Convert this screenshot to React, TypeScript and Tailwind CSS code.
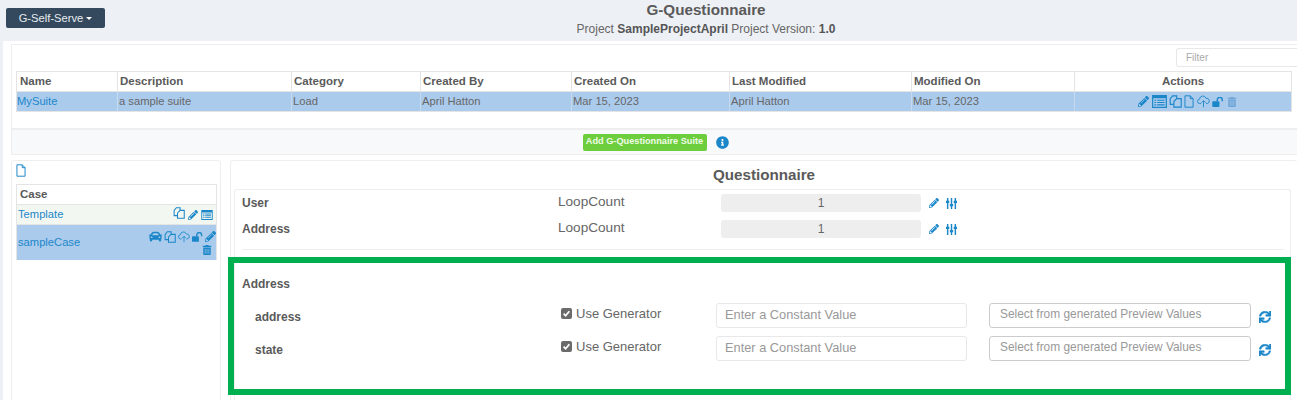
import { FaCar, FaInfoCircle, FaPencilAlt, FaSync, FaTrashAlt } from "react-icons/fa";

const blue = "text-[#1b87c9]";

const Duplicate = ({ className = "" }: { className?: string }) => (
  <svg viewBox="0 0 16 16" className={className} fill="none" stroke="currentColor" strokeWidth="1.4">
    <path d="M5.500 11.500H1.500V4.500l3-3.500h5v3.500" />
    <path d="M6 8l3.500-3.500h5.500V15H6z" />
  </svg>
);

const FileIcon = ({ className = "" }: { className?: string }) => (
  <svg viewBox="0 0 12 16" className={className} fill="none" stroke="currentColor" strokeWidth="1.200">
    <path d="M1 1h6.500L11 4.500V15H1z" />
    <path d="M7.500 1v3.500H11" />
  </svg>
);

const CloudUp = ({ className = "" }: { className?: string }) => (
  <svg viewBox="0 0 16 16" className={className} fill="none" stroke="currentColor" strokeWidth="1.100">
    <path d="M5 10.500H3.500a2.700 2.700 0 0 1-.3-5.400A4 4 0 0 1 11 4a3.300 3.300 0 0 1 1.500 6.500H11" />
    <path d="M8 15V7M5.500 9.500L8 7l2.500 2.500" />
  </svg>
);

const Unlock = ({ className = "" }: { className?: string }) => (
  <svg viewBox="0 0 16 14" className={className} fill="currentColor">
    <rect x="0" y="6" width="10" height="8" rx="1" />
    <path d="M7 6V4a3.500 3.500 0 0 1 7 0v2" fill="none" stroke="currentColor" strokeWidth="2" />
  </svg>
);

const ListAlt = ({ className = "" }: { className?: string }) => (
  <svg viewBox="0 0 16 14" className={className} fill="currentColor">
    <path fillRule="evenodd" d="M0 0h16v14H0zM1.300 3.500v9.200h13.400V3.500z" />
    <path d="M2.500 5h2v1.200h-2zM5.500 5h8v1.200h-8zM2.500 7.500h2v1.200h-2zM5.500 7.500h8v1.200h-8zM2.500 10h2v1.200h-2zM5.500 10h8v1.200h-8z" />
  </svg>
);

const Sliders = ({ className = "" }: { className?: string }) => (
  <svg viewBox="0 0 12 12" className={className} fill="currentColor">
    <path d="M1 0h1.600v12H1zM5.200 0h1.600v12H5.200zM9.400 0H11v12H9.400z" />
    <path d="M0 3h3.600v2.400H0zM4.200 6.500h3.600v2.400H4.200zM8.400 3H12v2.400H8.400z" />
  </svg>
);

const Checked = () => (
  <span className="flex h-[11px] w-[11px] items-center justify-center rounded-[2px] bg-[#6b6b6b]">
    <svg viewBox="0 0 10 10" className="h-[9px] w-[9px]" fill="none" stroke="white" strokeWidth="2">
      <path d="M1.800 5.200L4 7.500l4.200-5" />
    </svg>
  </span>
);

const columns = [
  ["Name", "w-[101px]"],
  ["Description", "w-[174px]"],
  ["Category", "w-[129px]"],
  ["Created By", "w-[151px]"],
  ["Created On", "w-[158px]"],
  ["Last Modified", "w-[182px]"],
  ["Modified On", "w-[163px]"],
];

const cells = ["a sample suite", "Load", "April Hatton", "Mar 15, 2023", "April Hatton", "Mar 15, 2023"];

const LoopRow = ({ name }: { name: string }) => (
  <div className="flex h-[26px] items-center text-[#5a5a5a]">
    <div className="w-[323px] pl-[7px] text-[12px] font-bold">{name}</div>
    <div className="mb-[1px] w-[163px] text-[13.600px] text-[#666]">LoopCount</div>
    <div className="flex h-[18px] w-[200px] items-center justify-center rounded-[3px] bg-[#eeeeee] text-[12px] text-[#666]">1</div>
    <FaPencilAlt className={`ml-[8px] text-[10px] ${blue}`} />
    <Sliders className={`ml-[7px] h-[11px] w-[11px] ${blue}`} />
  </div>
);

const GeneratorRow = ({ name }: { name: string }) => (
  <div className="flex h-[33px] items-center text-[#5a5a5a]">
    <div className="w-[326px] pl-[20px] text-[12px] font-bold">{name}</div>
    <div className="mb-[6px] flex w-[155px] items-center gap-[4px] text-[13px] text-[#666]">
      <Checked />
      <span>Use Generator</span>
    </div>
    <div className="mb-[3px] flex h-[25px] w-[251px] items-center rounded-[3px] border border-[#e8e8e8] pl-[8px] text-[12.800px] text-[#999]">
      Enter a Constant Value
    </div>
    <div className="mb-[3px] ml-[22px] flex h-[25px] w-[262px] items-center rounded-[3px] border border-[#cccccc] pl-[10px] text-[11.900px] text-[#999]">
      Select from generated Preview Values
    </div>
    <FaSync className={`ml-[8px] stroke-[20] text-[12px] ${blue}`} />
  </div>
);

export default function App() {
  return (
    <div className="h-[400px] w-[1297px] overflow-hidden bg-[#edf0f5] font-['Liberation_Sans',Arial,sans-serif] text-[11.200px] text-[#666]">
      <header className="flex h-[41px]">
        <div className="w-[105px] pl-[6px] pt-[8px]">
          <button className="flex h-[20px] w-[99px] items-center justify-center gap-[3px] rounded-[2px] bg-[#34495e] text-[11.200px] text-[#e8ecf0]">
            G-Self-Serve
            <span className="mt-[1px] border-x-[3px] border-t-[3px] border-x-transparent border-t-white" />
          </button>
        </div>
        <div className="flex-1 pl-[10px] pt-[1px] text-center">
          <h1 className="text-[15.200px] leading-[18px] font-bold text-[#5a5a5a]">G-Questionnaire</h1>
          <p className="mt-[2px] text-[12px] leading-[16px] text-[#666]">
            Project <b className="text-[#555]">SampleProjectApril</b> Project Version: <b className="text-[#555]">1.0</b>
          </p>
        </div>
      </header>

      <main className="ml-[3px] h-[359px] bg-white pl-[8px] pt-[3px]">
        <section className="h-[85px] border border-r-0 border-[#eeeeee] pl-[4px]">
          <div className="flex h-[26px] justify-end pt-[3px]">
            <div className="h-[19px] w-[121px] rounded-l-[3px] border border-r-0 border-[#e8e8e8] pl-[9px] text-[10px] leading-[17px] text-[#aaa]">
              Filter
            </div>
          </div>
          <div className="mr-[5px] border-x border-[#e4e4e4]">
            <div className="flex h-[21px] items-center border-y border-[#e4e4e4] text-[11.500px] font-bold text-[#5a5a5a]">
              {columns.map(([label, width], i) => (
                <div key={label} className={`${width} h-full border-r border-[#e4e4e4] leading-[19px] ${i === 0 ? "pl-[3px]" : "pl-[2px]"}`}>
                  {label}
                </div>
              ))}
              <div className="flex-1 text-center">Actions</div>
            </div>
            <div className="flex h-[20px] items-center border-b border-[#e4e4e4] bg-[#abcbed]">
              <div className="h-full w-[101px] border-r border-[#c6d9ee] leading-[19px] text-[#1b87c9]">MySuite</div>
              {cells.map((cell, i) => (
                <div key={i} className={`${columns[i + 1][1]} h-full border-r border-[#c6d9ee] pl-[1px] leading-[19px]`}>
                  {cell}
                </div>
              ))}
              <div className={`ml-[8px] flex flex-1 items-center justify-center gap-[2px] ${blue}`}>
                <FaPencilAlt className="text-[11px]" />
                <ListAlt className="ml-[1px] h-[13px] w-[15px]" />
                <Duplicate className="h-[13px] w-[13px]" />
                <FileIcon className="h-[13px] w-[10px]" />
                <CloudUp className="ml-[1px] h-[13px] w-[13px]" />
                <Unlock className="h-[10px] w-[12px]" />
                <FaTrashAlt className="ml-[1px] text-[10px] text-[#6fa5d6]" />
              </div>
            </div>
          </div>
        </section>

        <section className="flex h-[26px] items-center justify-center gap-[9px] border border-r-0 border-[#eeeeee] bg-[#f8f9fa] pl-[2px]">
          <button className="flex h-[17px] w-[124px] items-center justify-center whitespace-nowrap rounded-[2px] bg-[#6cce3c] text-[9.200px] font-bold text-[#f0fbe8]">
            Add G-Questionnaire Suite
          </button>
          <FaInfoCircle className={`text-[13px] ${blue}`} />
        </section>

        <div className="mt-[5px] flex gap-[9px]">
          <aside className="h-[241px] w-[210px] rounded-t-[3px] border border-[#eeeeee] pl-[4px] pr-[3px]">
            <FileIcon className={`mt-[3px] h-[13px] w-[10px] ${blue}`} />
            <div className="mt-[7px] border-x border-[#e4e4e4]">
              <div className="flex h-[21px] items-center border-y border-[#e4e4e4] pl-[3px] text-[11.500px] font-bold text-[#5a5a5a]">Case</div>
              <div className="flex h-[20px] items-center justify-between border-b border-[#e4e4e4] bg-[#f3f7f2] pl-[1px] pr-[3px] text-[#1b87c9]">
                <span>Template</span>
                <span className="flex items-center gap-[3px]">
                  <Duplicate className="mb-[3px] h-[12px] w-[12px]" />
                  <FaPencilAlt className="text-[10px]" />
                  <ListAlt className="h-[10px] w-[12px]" />
                </span>
              </div>
              <div className="flex h-[35px] items-center justify-between bg-[#abcbed] text-[#1b87c9]">
                <span className="pl-[1px]">sampleCase</span>
                <span className="flex w-[70px] flex-wrap items-center justify-end gap-x-[2px] gap-y-[2px]">
                  <FaCar className="text-[13px]" />
                  <Duplicate className="h-[12px] w-[12px]" />
                  <CloudUp className="h-[12px] w-[12px]" />
                  <Unlock className="h-[10px] w-[11px]" />
                  <FaPencilAlt className="text-[11px]" />
                  <FaTrashAlt className="mr-[4px] text-[10px]" />
                </span>
              </div>
            </div>
          </aside>

          <section className="h-[241px] flex-1 rounded-t-[3px] border border-r-0 border-[#eeeeee] pl-[3px]">
            <h2 className="h-[28px] pr-[3px] text-center text-[15.200px] leading-[28px] font-bold text-[#5a5a5a]">Questionnaire</h2>
            <div className="mr-[6px] h-[212px] rounded-t-[3px] border border-b-0 border-[#eeeeee]">
              <LoopRow name="User" />
              <LoopRow name="Address" />
              <div className="ml-[7px] mr-[6px] mt-[7px] border-t border-[#eeeeee]" />
              <div className="relative mt-[7px]">
                <div className="absolute -left-[7px] top-0 h-[138px] w-[1063px] border-[6px] border-[#00b050]" />
                <div className="px-[7px] pt-[20px] text-[12px] leading-[15px] font-bold text-[#5a5a5a]">Address</div>
                <div className="pt-[8px]">
                  <GeneratorRow name="address" />
                  <GeneratorRow name="state" />
                </div>
              </div>
            </div>
          </section>
        </div>
      </main>
    </div>
  );
}
